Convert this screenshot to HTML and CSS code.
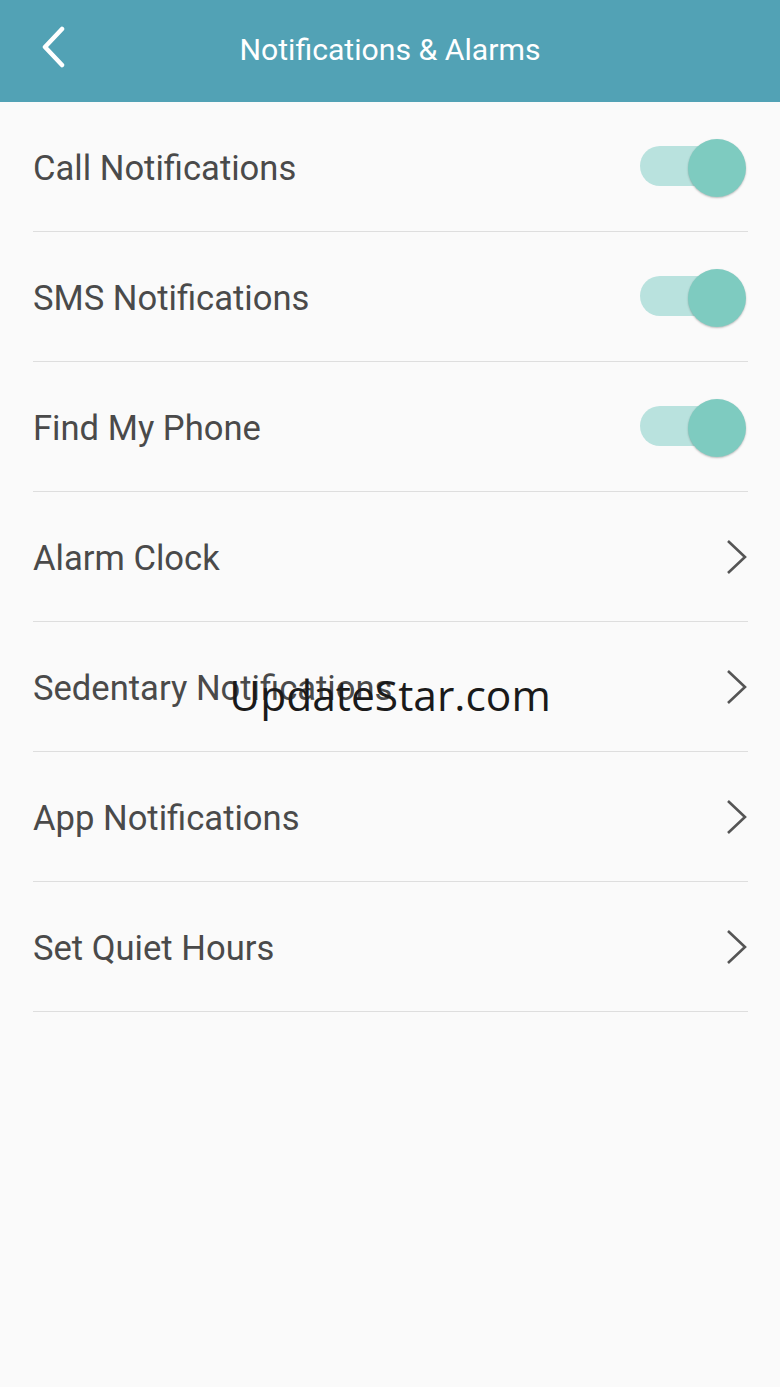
FILE: index.html
```html
<!DOCTYPE html>
<html lang="en">
<head>
    <meta charset="UTF-8">
    <meta name="viewport" content="width=device-width, initial-scale=1.0">
    <title>Notifications &amp; Alarms</title>
    <link rel="stylesheet" href="styles.css">
</head>
<body>
    <header class="topbar">
        <a class="back" href="#">
            <svg width="26" height="42" viewBox="0 0 26 42"><path d="M22 3 L5 21 L22 39" fill="none" stroke="#fff" stroke-width="4.5" stroke-linecap="round" stroke-linejoin="round"/></svg>
        </a>
        <h1>Notifications &amp; Alarms</h1>
    </header>
    <ul class="settings">
        <li class="row">
            <span>Call Notifications</span>
            <span class="toggle on"><span class="knob"></span></span>
        </li>
        <li class="row">
            <span>SMS Notifications</span>
            <span class="toggle on"><span class="knob"></span></span>
        </li>
        <li class="row">
            <span>Find My Phone</span>
            <span class="toggle on"><span class="knob"></span></span>
        </li>
        <li class="row">
            <span>Alarm Clock</span>
            <svg class="chevron" width="22" height="36" viewBox="0 0 22 36"><path d="M2 2 L19 18 L2 34" fill="none" stroke="#555" stroke-width="2.6"/></svg>
        </li>
        <li class="row">
            <span>Sedentary Notifications</span>
            <svg class="chevron" width="22" height="36" viewBox="0 0 22 36"><path d="M2 2 L19 18 L2 34" fill="none" stroke="#555" stroke-width="2.6"/></svg>
        </li>
        <li class="row">
            <span>App Notifications</span>
            <svg class="chevron" width="22" height="36" viewBox="0 0 22 36"><path d="M2 2 L19 18 L2 34" fill="none" stroke="#555" stroke-width="2.6"/></svg>
        </li>
        <li class="row">
            <span>Set Quiet Hours</span>
            <svg class="chevron" width="22" height="36" viewBox="0 0 22 36"><path d="M2 2 L19 18 L2 34" fill="none" stroke="#555" stroke-width="2.6"/></svg>
        </li>
    </ul>
    <div class="watermark">UpdateStar.com</div>
</body>
</html>
```

FILE: styles.css
```css
body {
    font-family: Roboto, "Liberation Sans", sans-serif;
    background-color: #fafafa;
    color: #4a4a4a;
    margin: 0;
    padding: 0;
    min-height: 1387px;
    position: relative;
}
.topbar {
    height: 102px;
    background-color: #52a2b5;
    display: flex;
    align-items: center;
    justify-content: center;
    position: relative;
}
.back {
    position: absolute;
    left: 40px;
    top: 26px;
    display: block;
}
.topbar h1 {
    margin: 0;
    font-size: 30.2px;
    font-weight: 400;
    color: #fff;
    margin-top: -4px;
}
.settings {
    list-style: none;
    margin: 0 32px 0 33px;
    padding: 0;
}
.row {
    height: 129px;
    border-bottom: 1px solid #dedede;
    display: flex;
    align-items: center;
    justify-content: space-between;
    font-size: 34.6px;
}
.row span:first-child {
    margin-top: 2px;
}
.toggle {
    position: relative;
    width: 92px;
    height: 40px;
    border-radius: 20px;
    background-color: #b9e2de;
    margin-right: 16px;
    margin-top: -2px;
}
.knob {
    position: absolute;
    right: -14px;
    top: -9px;
    width: 58px;
    height: 58px;
    border-radius: 50%;
    background-color: #7ecbc0;
    box-shadow: 0 1px 2px rgba(0, 0, 0, 0.25);
}
.chevron {
    margin-right: 0;
}
.watermark {
    position: absolute;
    left: 0;
    right: 0;
    top: 666px;
    text-align: center;
    font-family: "Open Sans", sans-serif;
    font-size: 42.5px;
    color: #1a1a1a;
}
```
